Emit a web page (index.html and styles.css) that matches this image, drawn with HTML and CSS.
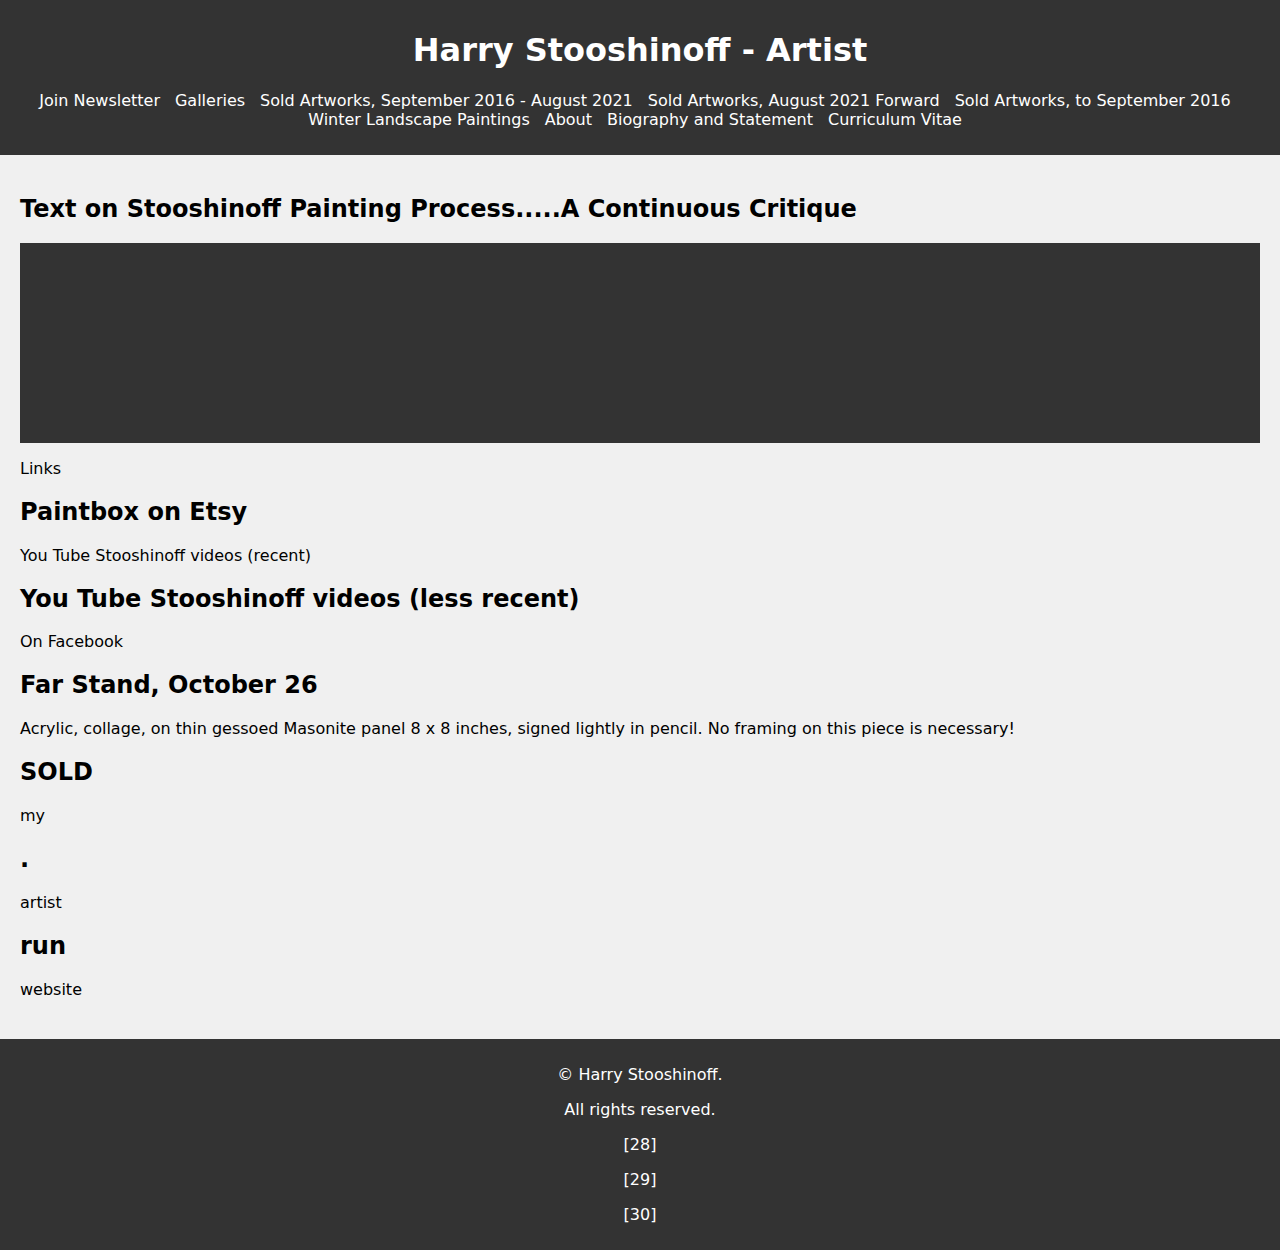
FILE: index.html
```html
<!DOCTYPE html>
<html lang="en">
<head>
<meta charset="utf-8">
<title>Harry Stooshinoff - Artist</title>
<link rel="stylesheet" href="styles.css">
</head>
<body>
<header class="site-header">
  <h1 class="site-title">Harry Stooshinoff - Artist</h1>
  <nav class="site-nav">
    <a href="#">Join Newsletter</a>
    <a href="#">Galleries</a>
    <a href="#">Sold Artworks, September 2016 - August 2021</a>
    <a href="#">Sold Artworks, August 2021 Forward</a>
    <a href="#">Sold Artworks, to September 2016</a>
    <a href="#">Winter Landscape Paintings</a>
    <a href="#">About</a>
    <a href="#">Biography and Statement</a>
    <a href="#">Curriculum Vitae</a>
  </nav>
</header>
<main class="content">
  <h2>Text on Stooshinoff Painting Process.....A Continuous Critique</h2>
  <div class="media-box"></div>
  <p>Links</p>
  <h2>Paintbox on Etsy</h2>
  <p>You Tube Stooshinoff videos (recent)</p>
  <h2>You Tube Stooshinoff videos (less recent)</h2>
  <p>On Facebook</p>
  <h2>Far Stand, October 26</h2>
  <p>Acrylic, collage, on thin gessoed Masonite panel 8 x 8 inches, signed lightly in pencil. No framing on this piece is necessary!</p>
  <h2>SOLD</h2>
  <p>my</p>
  <h2>.</h2>
  <p>artist</p>
  <h2>run</h2>
  <p>website</p>
</main>
<footer class="site-footer">
  <p>© Harry Stooshinoff.</p>
  <p>All rights reserved.</p>
  <p>[28]</p>
  <p>[29]</p>
  <p>[30]</p>
</footer>
</body>
</html>
```

FILE: styles.css
```css
html, body {
  margin: 0;
  padding: 0;
}
body {
  font-family: "DejaVu Sans", sans-serif;
  font-size: 16px;
  background: #f0f0f0;
  color: #000;
}
.site-header {
  background: #333;
  color: #fff;
  padding: 10px 20px 26px;
  text-align: center;
}
.site-title {
  font-size: 32px;
  font-weight: bold;
  margin: 21px 0 22px;
}
.site-nav {
  display: flex;
  flex-wrap: wrap;
  justify-content: center;
  column-gap: 5px;
}
.site-nav a {
  color: #fff;
  text-decoration: none;
  margin-right: 10px;
}
.content {
  padding: 20px 20px 24px;
}
.content h2 {
  font-size: 24px;
  font-weight: bold;
  margin: 0.83em 0;
}
.content p {
  margin: 16px 0;
}
.media-box {
  background: #333;
  height: 200px;
}
.site-footer {
  background: #333;
  color: #fff;
  text-align: center;
  padding: 10px 20px;
}
.site-footer p {
  margin: 16px 0;
}
```
